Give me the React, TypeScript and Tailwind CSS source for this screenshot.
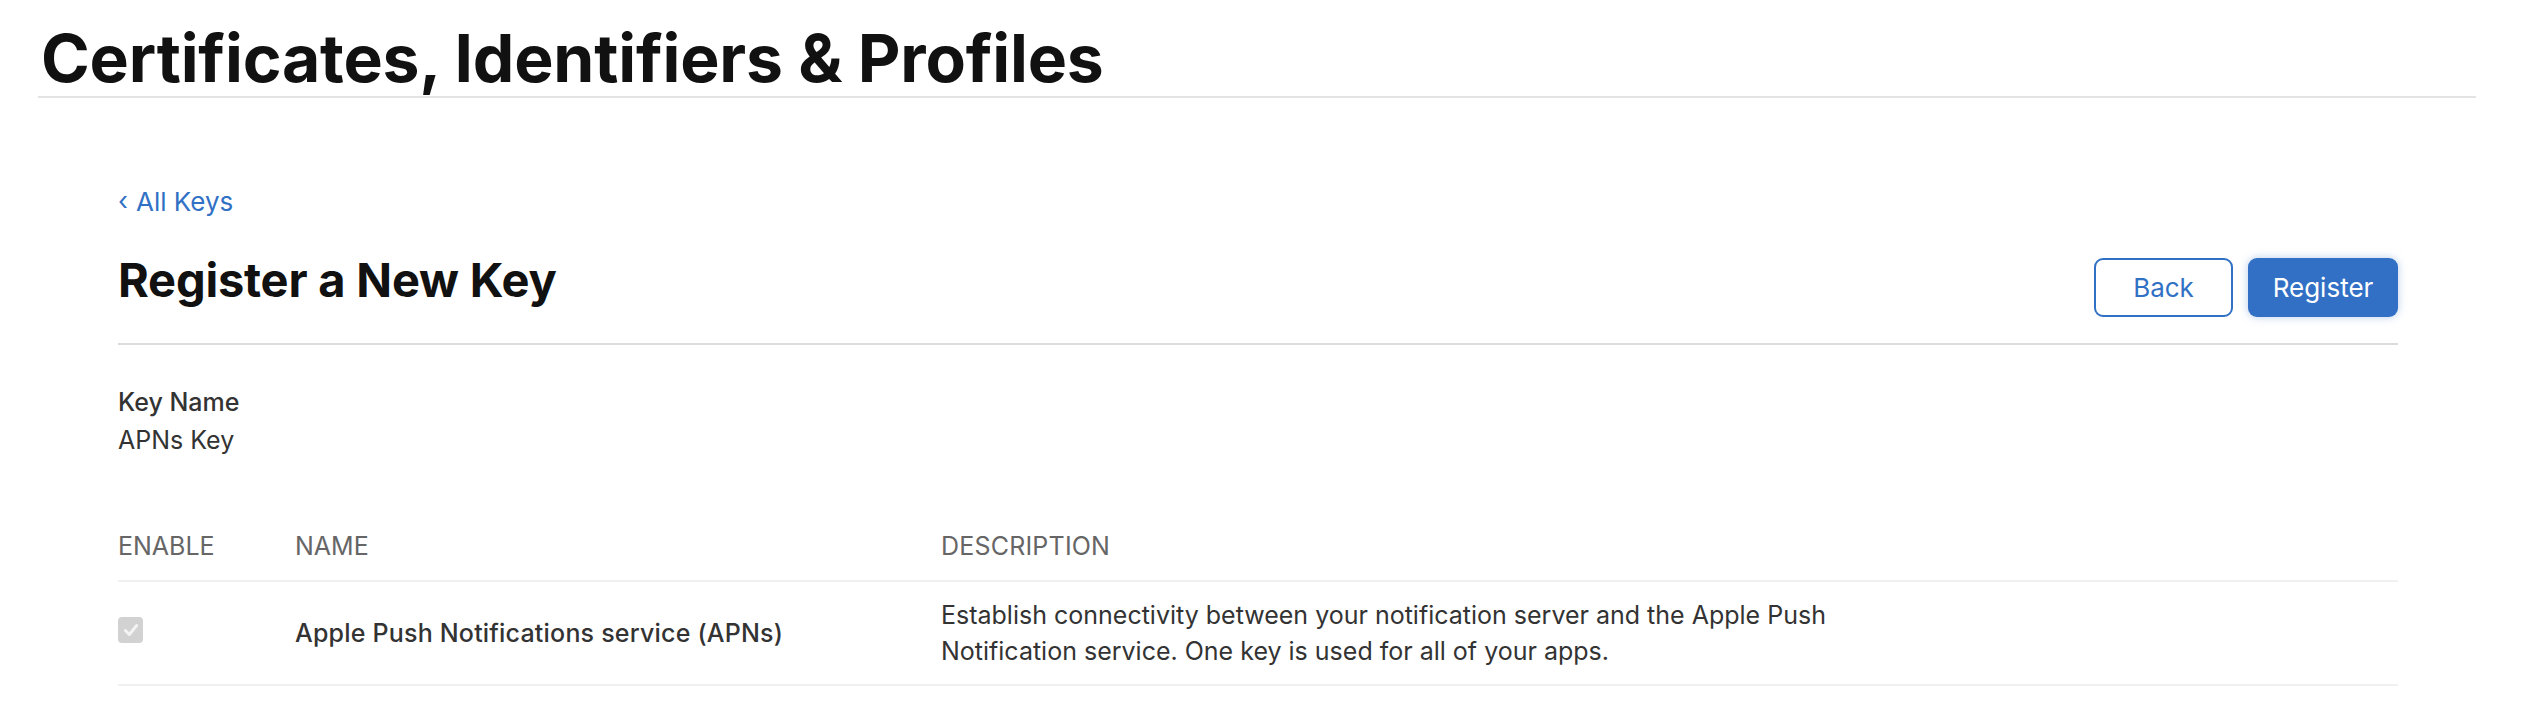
import React from 'react';

const font = { fontFamily: 'Inter, "Noto Sans", "Liberation Sans", sans-serif' };

export default function App() {
  return (
    <div className="min-h-screen bg-white text-[#333]" style={font}>
      <div className="pl-[38px] pr-[46px]">
        <header className="pt-[20px] border-b-2 border-[#e3e3e3]">
          <h1 className="text-[66px] leading-[76px] font-bold tracking-[-0.2px] text-[#111] pl-[3px]">
            Certificates, Identifiers &amp; Profiles
          </h1>
        </header>

        <main className="pl-[80px] pr-[78px]">
          <a href="#" className="mt-[86px] inline-flex items-center gap-[8px] text-[26px] leading-[36px] text-[#3171c5]">
            <span className="text-[26px] -mt-[2px]">‹</span>
            <span>All Keys</span>
          </a>

          <div className="mt-[32px] flex items-start justify-between border-b-2 border-[#dcdcdc] pb-[26px]">
            <h2 className="text-[47px] leading-[56px] font-bold tracking-[-0.2px] text-[#111]">Register a New Key</h2>
            <div className="mt-[6px] flex gap-[15px]">
              <button className="w-[139px] h-[59px] rounded-[9px] border-2 border-[#3171c5] bg-white text-[26px] text-[#3171c5]">
                Back
              </button>
              <button className="w-[150px] h-[59px] rounded-[9px] bg-[#3170c5] text-[26px] text-white shadow-[0_0_8px_rgba(49,112,197,0.35)]">
                Register
              </button>
            </div>
          </div>

          <section className="mt-[38px] text-[25px] leading-[38px]">
            <div className="font-medium">Key Name</div>
            <div>APNs Key</div>
          </section>

          <div className="mt-[69px] text-[25px] leading-[36px]">
            <div className="flex pb-[16px] border-b-2 border-[#f0f0f0] text-[#666] uppercase">
              <div className="w-[177px]">Enable</div>
              <div className="w-[646px]">Name</div>
              <div className="tracking-[0.2px]">Description</div>
            </div>
            <div className="flex items-center py-[15px] border-b-2 border-[#f0f0f0]">
              <div className="w-[177px] flex">
                <span className="w-[25px] h-[26px] rounded-[4px] bg-[#d2d2d2] flex items-center justify-center -mt-[6px]">
                  <svg viewBox="0 0 16 16" className="w-[18px] h-[18px]">
                    <path d="M3 8.5 L6.5 12 L13 4" fill="none" stroke="#f4f4f4" strokeWidth="2.6" strokeLinecap="round" strokeLinejoin="round" />
                  </svg>
                </span>
              </div>
              <div className="w-[646px] font-medium tracking-[0.2px] text-[#333]">Apple Push Notifications service (APNs)</div>
              <div className="max-w-[920px] text-[#333]">
                Establish connectivity between your notification server and the Apple Push Notification service. One key is used for all of your apps.
              </div>
            </div>
          </div>
        </main>
      </div>
    </div>
  );
}
